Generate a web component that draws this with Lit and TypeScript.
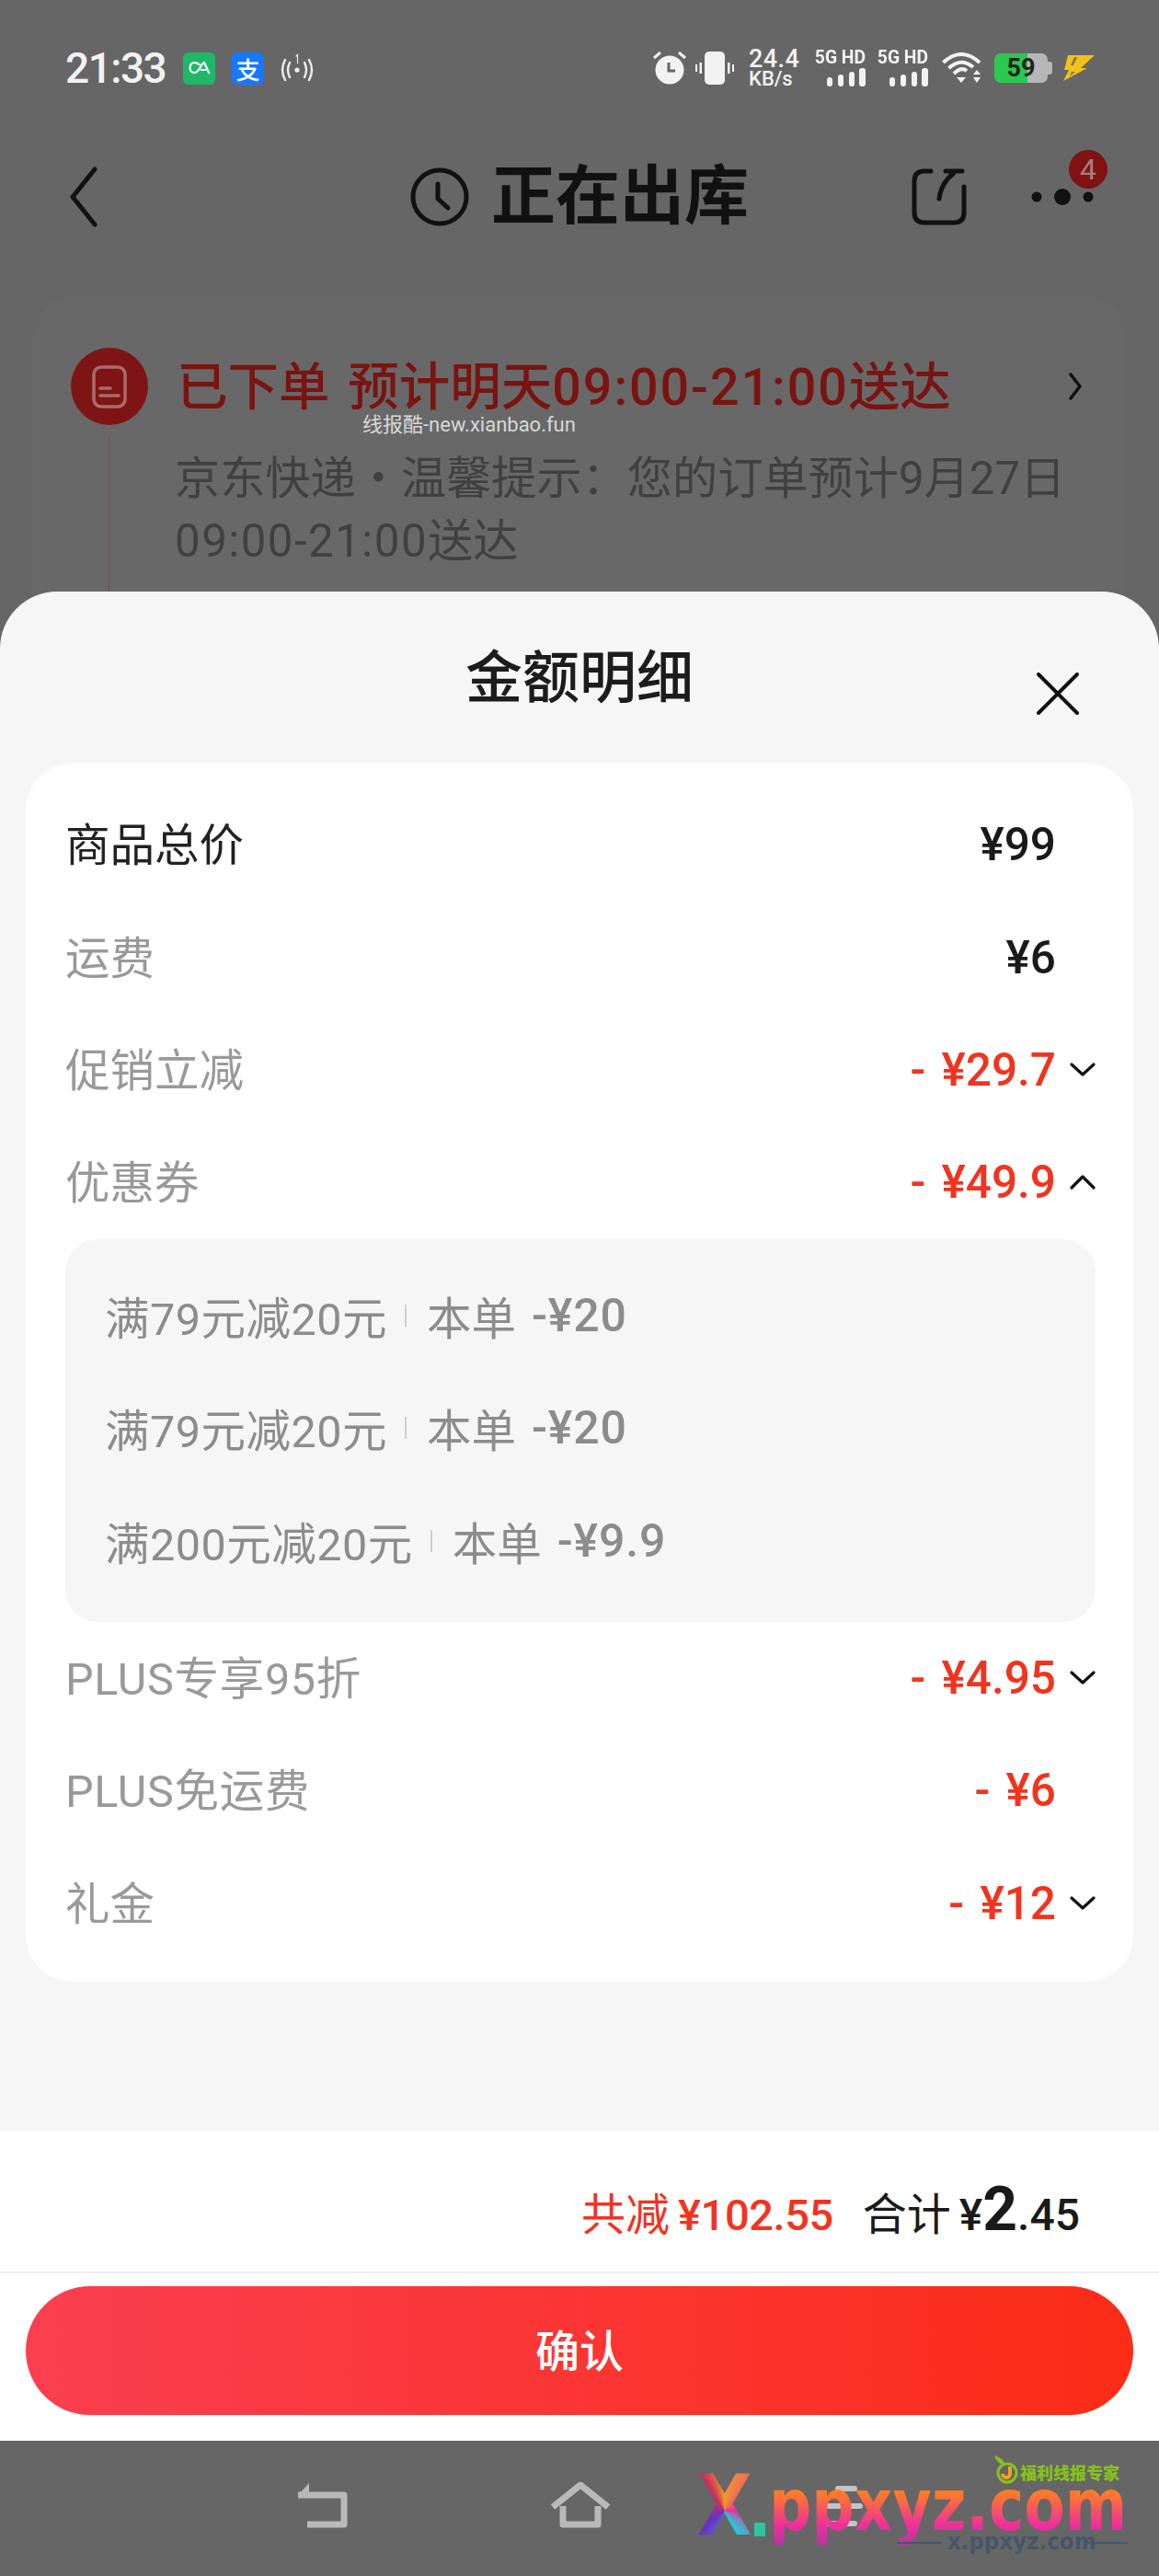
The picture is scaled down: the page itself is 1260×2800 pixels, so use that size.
import { LitElement, html, css, svg } from 'lit';
import { customElement } from 'lit/decorators.js';

type Fee = { label: string; value: string; red?: boolean; dark?: boolean; plus?: boolean; arrow?: 'down' | 'up' };

const topFees: Fee[] = [
  { label: '商品总价', value: '¥99', dark: true },
  { label: '运费', value: '¥6' },
  { label: '促销立减', value: '- ¥29.7', red: true, arrow: 'down' },
  { label: '优惠券', value: '- ¥49.9', red: true, arrow: 'up' },
];

const bottomFees: Fee[] = [
  { label: 'PLUS专享95折', value: '- ¥4.95', red: true, plus: true, arrow: 'down' },
  { label: 'PLUS免运费', value: '- ¥6', red: true, plus: true },
  { label: '礼金', value: '- ¥12', red: true, arrow: 'down' },
];

const coupons = [
  { name: '满79元减20元', off: '-¥20' },
  { name: '满79元减20元', off: '-¥20' },
  { name: '满200元减20元', off: '-¥9.9' },
];

const signalBars = svg`<rect x="0" y="10" width="6" height="10" rx="3"/><rect x="12" y="7" width="6" height="13" rx="3"/><rect x="24" y="4" width="6" height="16" rx="3"/><rect x="35" y="0" width="7" height="20" rx="3"/>`;

@customElement('app-root')
export class AppRoot extends LitElement {
  static styles = css`
    :host {
      display: block;
      font-family: Roboto, 'Noto Sans CJK SC', sans-serif;
    }
    .page {
      position: relative;
      height: 2800px;
      overflow: hidden;
      background: #666;
      display: flex;
      flex-direction: column;
    }
    svg { display: block; flex: none; }

    .status {
      display: flex;
      align-items: center;
      height: 40px;
      margin-top: 54px;
      padding: 0 70px 0 71px;
      color: #f2f2f2;
    }
    .time {
      font-size: 46px;
      font-weight: 500;
      letter-spacing: -1.5px;
      line-height: 40px;
      width: 128px;
    }
    .app-tile {
      width: 35px;
      height: 35px;
      border-radius: 6px;
      margin-right: 18px;
      display: flex;
      align-items: center;
      justify-content: center;
      color: #fff;
    }
    .app-tile.green { background: #1fb866; }
    .app-tile.blue { background: #1677ff; font-size: 26px; font-weight: 500; }
    .status-right {
      margin-left: auto;
      display: flex;
      align-items: center;
    }
    .speed {
      width: 56px;
      margin: 0 15px 0 16px;
      font-weight: 500;
      text-align: left;
    }
    .speed div:first-child { font-size: 27px; line-height: 23px; letter-spacing: 0.4px; }
    .speed div:last-child { font-size: 22px; line-height: 20px; }
    .net {
      width: 56px;
      margin-right: 12px;
      display: flex;
      flex-direction: column;
      align-items: flex-end;
      gap: 3px;
    }
    .net span {
      font-size: 21px;
      line-height: 17px;
      font-weight: 700;
      white-space: nowrap;
      transform: scaleX(0.92);
      transform-origin: right;
    }
    .battery {
      position: relative;
      width: 58px;
      height: 32px;
      margin: 0 11px 0 13px;
      border-radius: 7px;
      overflow: hidden;
      background: linear-gradient(90deg, #2cc84f 62%, #b7b7b7 62%);
      color: #222;
      font-size: 27px;
      line-height: 33px;
      font-weight: 700;
      text-align: center;
    }
    .nub {
      width: 5px;
      height: 14px;
      margin-left: -11px;
      margin-right: 11px;
      background: #b7b7b7;
      border-radius: 0 3px 3px 0;
    }

    .topbar {
      display: flex;
      align-items: center;
      height: 66px;
      margin-top: 87px;
      padding-left: 76px;
    }
    .topbar-title {
      width: 287px;
      margin-left: 24px;
      font-size: 70px;
      line-height: 66px;
      font-weight: 700;
      color: #111;
      white-space: nowrap;
    }
    .more {
      position: relative;
      margin-left: 70px;
    }
    .badge {
      position: absolute;
      left: 41px;
      top: -41px;
      width: 42px;
      height: 42px;
      border-radius: 50%;
      background: #7f1212;
      color: #a97d7d;
      font-size: 32px;
      line-height: 42px;
      text-align: center;
    }

    .track {
      margin: 75px 36px 0;
      height: 400px;
      padding: 56px 0 0 41px;
      background: #686868;
      border-radius: 44px;
      display: grid;
      grid-template-columns: 84px 1fr;
      grid-template-rows: 84px auto;
      column-gap: 31px;
    }
    .track-icon {
      width: 84px;
      height: 84px;
      border-radius: 50%;
      background: #7e1414;
      display: flex;
      align-items: center;
      justify-content: center;
    }
    .track-title {
      display: flex;
      align-items: center;
      justify-content: space-between;
      padding-right: 48px;
      color: #7a1410;
      font-size: 55.5px;
      font-weight: 500;
      white-space: nowrap;
      word-spacing: 6px;
    }
    .track-title span { padding-bottom: 8px; }
    .track-title em {
      font-style: normal;
      letter-spacing: 2px;
    }
    .track-line {
      width: 1px;
      height: 200px;
      margin: 13px 0 0 41px;
      background: #75503f;
    }
    .track-body {
      margin: 24px 0 0 -2px;
      padding-right: 30px;
      font-size: 49.2px;
      line-height: 68px;
      color: #404040;
    }
    .track-body em {
      font-style: normal;
      letter-spacing: 1.5px;
    }
    .source {
      position: absolute;
      left: 394px;
      top: 449px;
      font-size: 22px;
      line-height: 26px;
      color: #d8d8d8;
      white-space: nowrap;
    }

    .sheet {
      position: absolute;
      left: 0;
      right: 0;
      top: 643px;
      height: 2010px;
      border-radius: 62px 62px 0 0;
      background: #f6f6f6;
      display: flex;
      flex-direction: column;
    }
    .sheet-head {
      position: relative;
      height: 187px;
      padding-top: 53px;
      box-sizing: border-box;
      text-align: center;
      font-size: 62px;
      line-height: 84px;
      font-weight: 500;
      color: #1c1c1c;
    }
    .close {
      position: absolute;
      right: 87px;
      top: 88px;
    }
    .panel {
      margin: 0 28px;
      padding: 27px 41px 24px 43px;
      background: #fff;
      border-radius: 50px;
    }
    .fee {
      display: flex;
      align-items: center;
      height: 122.4px;
      color: #999;
      font-size: 48.5px;
    }
    .fee.dark { color: #222; }
    .fee-label { padding-bottom: 6px; }
    .fee-label.plus { letter-spacing: 0.7px; }
    .fee-value {
      margin-left: auto;
      color: #1a1a1a;
      font-size: 49.5px;
      font-weight: 500;
      white-space: pre;
      word-spacing: 5px;
    }
    .fee-value.red { color: #f2331f; }
    .fee-arrow {
      width: 43px;
      display: flex;
      justify-content: flex-end;
    }
    .coupons {
      padding: 25px 44px 24px 43px;
      background: #f6f6f6;
      border-radius: 36px;
      color: #8c8c8c;
      font-size: 48.5px;
    }
    .coupon {
      display: flex;
      align-items: center;
      height: 122.4px;
      padding-bottom: 6px;
      box-sizing: border-box;
      white-space: nowrap;
    }
    .coupon-name { letter-spacing: 0.5px; }
    .coupon i {
      width: 2px;
      height: 24px;
      margin: 0 22px 0 19px;
      background: #cfcfcf;
    }
    .coupon b {
      margin-left: 17px;
      font-size: 50px;
      font-weight: 500;
      letter-spacing: 0.8px;
    }

    .foot {
      margin-top: auto;
      background: #fff;
    }
    .sum {
      height: 133px;
      padding: 20px 86px 0 0;
      border-bottom: 2px solid #eee;
      display: flex;
      align-items: center;
      justify-content: flex-end;
      font-size: 48px;
      color: #1a1a1a;
      white-space: nowrap;
      word-spacing: -3px;
    }
    .sum-off { color: #f2331f; margin-right: 32px; }
    .sum b { font-weight: 500; }
    .sum .off-num { font-size: 47px; letter-spacing: -0.4px; }
    .sum .big { font-size: 66px; font-weight: 700; line-height: 60px; }
    .confirm {
      margin: 14px 28px 28px;
      height: 140px;
      box-sizing: border-box;
      padding-bottom: 6px;
      border-radius: 70px;
      background: linear-gradient(90deg, #fa3f50, #fb2c17);
      color: #fff;
      font-size: 48px;
      font-weight: 500;
      display: flex;
      align-items: center;
      justify-content: center;
    }

    .nav {
      position: relative;
      margin-top: auto;
      height: 147px;
      box-sizing: border-box;
      padding: 45px 0 0 322px;
      display: flex;
      align-items: flex-start;
    }
    .logo {
      position: absolute;
      left: 0;
      top: 0;
      width: 100%;
      height: 100%;
    }
    .logo span { position: absolute; white-space: nowrap; }
    .logo-x {
      left: 758px;
      top: 21px;
      font: 700 90px/100px 'DejaVu Sans', sans-serif;
      background: conic-gradient(from 0deg at 50% 55%, #f0a020, #ec2ea0 25%, #27c8d8 40%, #6a30c0 65%, #c83060 90%, #f0a020);
      -webkit-background-clip: text;
      background-clip: text;
      color: transparent;
      transform: scaleX(0.86);
      transform-origin: left;
    }
    .logo-dot {
      left: 820px;
      top: 89px;
      width: 12px;
      height: 15px;
      background: #2fc4a0;
    }
    .logo-name {
      left: 836px;
      top: 20px;
      font: 700 78px/100px 'DejaVu Sans', sans-serif;
      background: linear-gradient(#ff7a2a 38%, #ee2f9c 72%, #b8389c 90%);
      -webkit-background-clip: text;
      background-clip: text;
      color: transparent;
      transform: scaleX(0.83);
      transform-origin: left;
    }
    .logo-site {
      left: 1030px;
      top: 95px;
      font: 700 25px/30px 'DejaVu Sans', sans-serif;
      color: #44566a;
      transform: scaleX(0.92);
      transform-origin: left;
    }
    .logo-rule { height: 2px; width: 48px; top: 110px; background: #44566a; }
    .logo-tag {
      left: 1109px;
      top: 25px;
      font-size: 18px;
      line-height: 22px;
      font-weight: 900;
      color: #85c21b;
    }
    .logo-leaf { position: absolute; left: 1080px; top: 16px; }
  `;

  private chevron(dir: 'down' | 'up') {
    const d = dir === 'up' ? 'M2 14 L14 2 L26 14' : 'M2 2 L14 13 L26 2';
    return html`<svg width="28" height="16" viewBox="0 0 28 16" fill="none" stroke="#111" stroke-width="3.2" stroke-linecap="round" stroke-linejoin="round"><path d=${d}></path></svg>`;
  }

  private renderFee(f: Fee) {
    return html`
      <div class="fee ${f.dark ? 'dark' : ''}">
        <span class="fee-label ${f.plus ? 'plus' : ''}">${f.label}</span>
        <span class="fee-value ${f.red ? 'red' : ''}">${f.value}</span>
        <span class="fee-arrow">${f.arrow ? this.chevron(f.arrow) : ''}</span>
      </div>
    `;
  }

  private renderStatus() {
    return html`
      <div class="status">
        <div class="time">21:33</div>
        <div class="app-tile green">
          <svg width="24" height="16" viewBox="0 0 24 16" fill="none" stroke="#fff" stroke-width="2.2"><path d="M12 5 C10 2 8 2 6 2 C3 2 1.5 5 1.5 8 C1.5 11 4 13 6.5 13 C9.5 13 12 9 14.5 4 L17 2 L22.5 14 M13 10 L19 10"></path></svg>
        </div>
        <div class="app-tile blue">支</div>
        <svg width="36" height="32" viewBox="0 0 36 32" fill="none" stroke="#eee" stroke-width="2.4" stroke-linecap="round">
          <circle cx="18" cy="18" r="2.6" fill="#eee" stroke="none"></circle>
          <path d="M10 10 Q6 18 10 26 M26 10 Q30 18 26 26"></path>
          <path d="M5 7 Q-1 18 5 29 M31 7 Q37 18 31 29"></path>
          <path d="M17 3 L18.5 1.5 L18.5 11" stroke-width="1.2"></path>
        </svg>
        <div class="status-right">
          <svg width="36" height="36" viewBox="0 0 36 36" fill="#f2f2f2">
            <circle cx="18" cy="20" r="15.5"></circle>
            <path d="M17 12 V21 H24" fill="none" stroke="#666" stroke-width="3"></path>
            <path d="M1 7 L8 1 M35 7 L28 1" fill="none" stroke="#f2f2f2" stroke-width="3"></path>
          </svg>
          <svg width="42" height="36" viewBox="0 0 42 36" fill="#f2f2f2" style="margin-left:10px">
            <rect x="10" y="0" width="22" height="36" rx="5"></rect>
            <rect x="4.5" y="12" width="2.5" height="12"></rect>
            <rect x="0" y="14" width="2" height="8"></rect>
            <rect x="35" y="12" width="2.5" height="12"></rect>
            <rect x="40" y="14" width="2" height="8"></rect>
          </svg>
          <div class="speed"><div>24.4</div><div>KB/s</div></div>
          ${[0, 1].map(() => html`
            <div class="net">
              <span>5G HD</span>
              <svg width="42" height="20" viewBox="0 0 42 20" fill="#f2f2f2">${signalBars}</svg>
            </div>
          `)}
          <svg width="44" height="34" viewBox="0 0 44 34" fill="none" stroke="#f2f2f2" stroke-width="4" style="margin-left:3px">
            <path d="M1.5 11 Q21 -7 41 11"></path>
            <path d="M7.5 17 Q21 5 34 16"></path>
            <path d="M13 23 Q21 15 27 20"></path>
            <path d="M16 27 H26 L21 33 Z" fill="#f2f2f2" stroke="none"></path>
            <path d="M34 24 L38 19 L42 24 Z M34 27 H42 L38 33 Z" fill="#f2f2f2" stroke="none"></path>
          </svg>
          <div class="battery">59</div>
          <div class="nub"></div>
          <svg width="35" height="30" viewBox="0 0 35 30" fill="#f4c01a">
            <path d="M6 1 H35 L20 15 H27 L1 29 L7 17 H2 Z"></path>
            <path d="M13 3 L9 12 L12 12 L16 3 Z M10 19 L8 24 L14 19 Z" fill="#7a7a5a"></path>
          </svg>
        </div>
      </div>
    `;
  }

  private renderTopbar() {
    return html`
      <div class="topbar">
        <svg width="30" height="66" viewBox="0 0 30 66" fill="none" stroke="#111" stroke-width="5" stroke-linecap="round" stroke-linejoin="round"><path d="M27 3 L3 33 L27 63"></path></svg>
        <svg width="64" height="64" viewBox="0 0 64 64" fill="none" stroke="#111" stroke-width="5" stroke-linecap="round" style="margin-left:340px"><circle cx="32" cy="32" r="29"></circle><path d="M30 18 V34 L41 44"></path></svg>
        <div class="topbar-title">正在出库</div>
        <svg width="60" height="62" viewBox="0 0 60 62" fill="none" stroke="#111" stroke-width="5" stroke-linecap="round" stroke-linejoin="round" style="margin-left:170px">
          <path d="M21 3 H14 Q3 3 3 14 V48 Q3 59 14 59 H46 Q57 59 57 48 V20"></path>
          <path d="M30 33 Q32 16 46 5 M37 3 H55"></path>
        </svg>
        <div class="more">
          <svg width="72" height="20" viewBox="0 0 72 20" fill="#111"><circle cx="6" cy="10" r="5.5"></circle><circle cx="34" cy="10" r="9"></circle><circle cx="62" cy="10" r="5.5"></circle></svg>
          <div class="badge">4</div>
        </div>
      </div>
    `;
  }

  private renderTrack() {
    return html`
      <div class="track">
        <div class="track-icon">
          <svg width="38" height="47" viewBox="0 0 38 47" fill="none" stroke="#a86c68" stroke-width="3.6" stroke-linecap="round"><rect x="2" y="2" width="34" height="43" rx="8"></rect><path d="M9 25 H20 M9 33 H29"></path></svg>
        </div>
        <div class="track-title">
          <span>已下单 预计明天<em>09:00-21:00</em>送达</span>
          <svg width="14" height="30" viewBox="0 0 14 30" fill="none" stroke="#111" stroke-width="3.5" stroke-linecap="round" stroke-linejoin="round"><path d="M2 2 L12 15 L2 28"></path></svg>
        </div>
        <div class="track-line"></div>
        <div class="track-body">京东快递・温馨提示：您的订单预计9月27日<br /><em>09:00-21:00</em>送达</div>
      </div>
      <div class="source">线报酷-new.xianbao.fun</div>
    `;
  }

  private renderSheet() {
    return html`
      <div class="sheet">
        <div class="sheet-head">
          金额明细
          <svg class="close" width="46" height="46" viewBox="0 0 46 46" fill="none" stroke="#111" stroke-width="4" stroke-linecap="round"><path d="M2 2 L44 44 M44 2 L2 44"></path></svg>
        </div>
        <div class="panel">
          ${topFees.map((f) => this.renderFee(f))}
          <div class="coupons">
            ${coupons.map((c) => html`
              <div class="coupon"><span class="coupon-name">${c.name}</span><i></i><span>本单</span><b>${c.off}</b></div>
            `)}
          </div>
          ${bottomFees.map((f) => this.renderFee(f))}
        </div>
        <div class="foot">
          <div class="sum">
            <span class="sum-off">共减 <b class="off-num">¥102.55</b></span>
            <span>合计 <b>¥</b><span class="big">2</span><b>.45</b></span>
          </div>
          <div class="confirm">确认</div>
        </div>
      </div>
    `;
  }

  private renderNav() {
    return html`
      <div class="nav">
        <svg width="56" height="50" viewBox="0 0 56 50" fill="none" stroke="#b9b9b9" stroke-width="7" stroke-linejoin="round">
          <path d="M2 14 H52 V46 H12"></path>
          <path d="M14 1 L2 14 L14 16 Z" fill="#b9b9b9" stroke="none"></path>
        </svg>
        <svg width="66" height="50" viewBox="0 0 66 50" fill="none" stroke="#b9b9b9" stroke-width="7" stroke-linejoin="round" style="margin-left:220px">
          <path d="M3 27 L33 3 L63 27"></path>
          <path d="M14 26 V46 H52 V26"></path>
        </svg>
        <svg width="50" height="46" viewBox="0 0 50 46" fill="#c4c4c4" style="margin-left:226px;margin-top:4px">
          <rect x="18" y="0" width="24" height="6" rx="3"></rect>
          <rect x="8" y="19" width="40" height="6" rx="3"></rect>
          <rect x="0" y="38" width="42" height="6" rx="3"></rect>
        </svg>
        <div class="logo">
          <span class="logo-x">X</span>
          <span class="logo-dot"></span>
          <span class="logo-name">ppxyz.com</span>
          <span class="logo-rule" style="left:975px"></span>
          <span class="logo-site">x.ppxyz.com</span>
          <span class="logo-rule" style="left:1178px"></span>
          <svg class="logo-leaf" width="28" height="32" viewBox="0 0 28 32" fill="none">
            <circle cx="15" cy="19" r="10" stroke="#85c21b" stroke-width="3"></circle>
            <path d="M1 0 Q10 2 13 10 Q4 10 1 0 Z" fill="#85c21b"></path>
            <path d="M10 20 a4 4 0 1 0 8 0 V12" stroke="#f4a11a" stroke-width="4"></path>
          </svg>
          <span class="logo-tag">福利线报专家</span>
        </div>
      </div>
    `;
  }

  render() {
    return html`
      <div class="page">
        ${this.renderStatus()}
        ${this.renderTopbar()}
        ${this.renderTrack()}
        ${this.renderSheet()}
        ${this.renderNav()}
      </div>
    `;
  }
}
